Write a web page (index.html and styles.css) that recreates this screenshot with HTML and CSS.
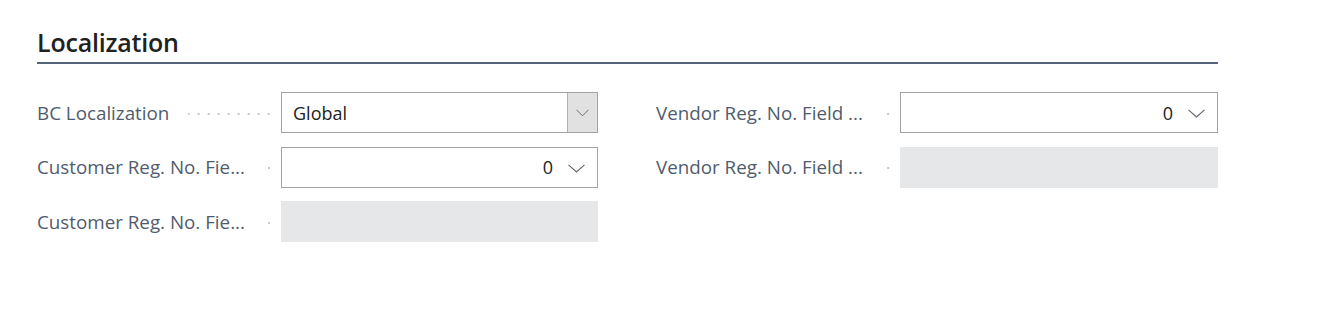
FILE: index.html
```html
<!DOCTYPE html>
<html lang="en">
<head>
<meta charset="utf-8">
<title>Localization</title>
<link rel="stylesheet" href="styles.css">
</head>
<body>
<section class="group">
  <h2 class="group-title">Localization</h2>
  <div class="grid">
    <div class="col">
      <div class="field">
        <div class="caption"><span class="label">BC Localization</span><span class="leader"></span></div>
        <div class="input select"><span class="value">Global</span><span class="drop-btn"><svg width="13" height="8" viewBox="0 0 13 8"><polyline points="0.5,0.8 6.5,6.8 12.5,0.8" fill="none" stroke="#6b6f75" stroke-width="1"/></svg></span></div>
      </div>
      <div class="field">
        <div class="caption"><span class="label">Customer Reg. No. Fie...</span><span class="leader"></span></div>
        <div class="input number"><span class="value">0</span><span class="chev"><svg width="17" height="9" viewBox="0 0 17 9"><polyline points="0.5,0.8 8.5,8 16.5,0.8" fill="none" stroke="#5f6670" stroke-width="1.1"/></svg></span></div>
      </div>
      <div class="field">
        <div class="caption"><span class="label">Customer Reg. No. Fie...</span><span class="leader"></span></div>
        <div class="input disabled"></div>
      </div>
    </div>
    <div class="col">
      <div class="field">
        <div class="caption"><span class="label">Vendor Reg. No. Field ...</span><span class="leader"></span></div>
        <div class="input number"><span class="value">0</span><span class="chev"><svg width="17" height="9" viewBox="0 0 17 9"><polyline points="0.5,0.8 8.5,8 16.5,0.8" fill="none" stroke="#5f6670" stroke-width="1.1"/></svg></span></div>
      </div>
      <div class="field">
        <div class="caption"><span class="label">Vendor Reg. No. Field ...</span><span class="leader"></span></div>
        <div class="input disabled"></div>
      </div>
    </div>
  </div>
</section>
</body>
</html>
```

FILE: styles.css
```css
html, body {
  margin: 0;
  padding: 0;
  background: #ffffff;
}

body {
  font-family: "Open Sans", "Noto Sans", sans-serif;
  color: #212121;
}

.group {
  width: 1181px;
  margin-left: 37px;
  padding-top: 24px;
}

.group-title {
  margin: 0;
  font-size: 25px;
  font-weight: 600;
  line-height: 36px;
  color: #212121;
  letter-spacing: -0.2px;
  padding-bottom: 2px;
  border-bottom: 2px solid #56647a;
}

.grid {
  display: grid;
  grid-template-columns: 561px 562px;
  column-gap: 58px;
  margin-top: 28px;
}

.col {
  display: flex;
  flex-direction: column;
  gap: 13.5px;
}

.field {
  display: flex;
  align-items: center;
  height: 41px;
}

.caption {
  width: 244px;
  display: flex;
  align-items: center;
  flex: none;
}

.label {
  font-size: 18.8px;
  color: #505c6d;
  white-space: nowrap;
}

.leader {
  flex: 1;
  min-width: 10px;
  height: 4px;
  margin: 2px 7px 0 19px;
  background-image: radial-gradient(circle, #c4c8cd 0.9px, transparent 1.3px);
  background-size: 10px 4px;
  background-repeat: repeat-x;
  background-position: right center;
}

.input {
  flex: 1;
  height: 41px;
  box-sizing: border-box;
  border: 1px solid #a3a3a3;
  display: flex;
  align-items: center;
  background: #ffffff;
}

.input .value {
  font-size: 18px;
  color: #212121;
}

.select .value {
  flex: 1;
  padding-left: 11px;
}

.drop-btn {
  align-self: stretch;
  width: 29px;
  display: flex;
  align-items: center;
  justify-content: center;
  background: #e1e1e1;
  border-left: 1px solid #b0b0b0;
}

.number {
  justify-content: flex-end;
}

.number .chev {
  display: flex;
  align-items: center;
  margin: 2px 12px 0 15px;
}

.disabled {
  background: #e6e7e9;
  border-color: #e6e7e9;
}
```
